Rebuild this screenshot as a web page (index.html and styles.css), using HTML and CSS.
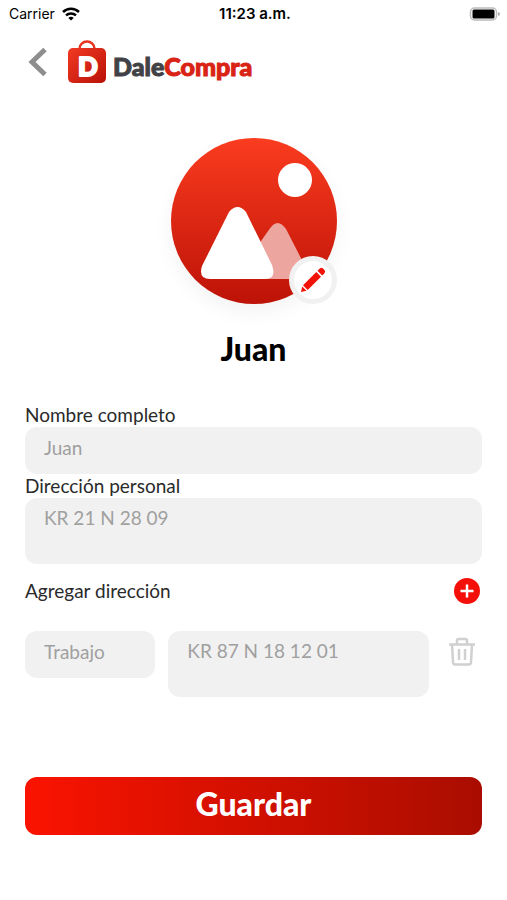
FILE: index.html
```html
<!DOCTYPE html>
<html lang="es">
<head>
<meta charset="utf-8">
<meta name="viewport" content="width=device-width, initial-scale=1">
<title>DaleCompra</title>
<link rel="stylesheet" href="styles.css">
</head>
<body>
<div class="status">
  <div class="carrier">Carrier
    <svg width="18" height="14" viewBox="0 0 18 14" fill="none" stroke="#000" stroke-width="2.5" aria-hidden="true"><path d="M1 5a11.5 11.5 0 0 1 16 0M4 8.4a7.2 7.2 0 0 1 10 0"/><path d="M9 13.6 6.3 10.900a4 4 0 0 1 5.400 0z" fill="#000" stroke="none"/></svg>
  </div>
  <time class="clock">11:23 a.m.</time>
  <svg class="battery" width="32" height="14" viewBox="0 0 32 14" aria-hidden="true"><rect x="1.500" y="1" width="26" height="12" rx="4" fill="#fff" stroke="#bbb" stroke-width="1.500"/><rect x="3.500" y="2.500" width="22" height="9" rx="1.500"/><path d="M29 5v4q2-.6 2-2t-2-2z" fill="#aaa"/></svg>
</div>
<header class="header">
  <button class="icon-button back" type="button" aria-label="Volver">
    <svg width="20" height="30" viewBox="0 0 20 30" fill="none" stroke="#8e8e8e" stroke-width="5"><path d="M17 2.500 4 15l13 12.500"/></svg>
  </button>
  <a class="brand" href="#">
    <svg width="38" height="44" viewBox="0 0 38 44" aria-hidden="true">
      <defs><linearGradient id="bag" x1="0" y1="0" x2="1" y2="1"><stop stop-color="#f23a22"/><stop offset="1" stop-color="#b91108"/></linearGradient></defs>
      <path d="M11.500 10V8.500a7.500 7 0 0 1 15 0V10" fill="none" stroke="#e83520" stroke-width="2.500"/>
      <rect y="8" width="38" height="35" rx="5" fill="url(#bag)"/>
      <text class="bag-letter" x="20" y="36" text-anchor="middle">D</text>
    </svg>
    <span class="wordmark"><span class="dark">Dale</span>Compra</span>
  </a>
</header>
<main class="profile">
  <div class="avatar">
    <svg class="photo" viewBox="0 0 166 166" role="img" aria-label="Foto de perfil">
      <defs><linearGradient id="sky" x1="0" y1="0" x2="0" y2="1"><stop stop-color="#fa3c1f"/><stop offset="1" stop-color="#bd1207"/></linearGradient></defs>
      <circle cx="83" cy="83" r="83" fill="url(#sky)"/>
      <circle cx="124" cy="42" r="17" fill="#fff"/>
      <path d="M69 133 98.500 91q8-12 16.500 0l19 37q3 13-8 13H75z" fill="#eda5a0"/>
      <path d="M58 74q8.500-10 17 0l26 53q5 14-7 14H39q-12 0-8-13z" fill="#fff"/>
    </svg>
    <button class="edit" type="button" aria-label="Editar foto">
      <svg width="26" height="26" viewBox="0 0 26 26" fill="#f31208"><path d="m1 25 1.200-5.500 4.300 4.300zM3 18.300 16.300 5l4.700 4.700L7.700 23zM17.500 3.800l2.300-2.300q1.600-1.300 3.200 0l1.500 1.500q1.300 1.600 0 3.200l-2.300 2.300z"/></svg>
    </button>
  </div>
  <h1 class="name">Juan</h1>
  <form class="form">
    <label class="label" for="full-name">Nombre completo</label>
    <input class="field" id="full-name" type="text" placeholder="Juan">
    <label class="label" for="address">Dirección personal</label>
    <textarea class="field tall" id="address" placeholder="KR 21 N 28 09"></textarea>
    <div class="add-row">
      <span>Agregar dirección</span>
      <button class="icon-button add" type="button" aria-label="Agregar dirección">
        <svg width="26" height="26" viewBox="0 0 26 26"><circle cx="13" cy="13" r="13" fill="#f41008"/><path d="M13 6.500v13M6.500 13h13" stroke="#fff" stroke-width="2.500"/></svg>
      </button>
    </div>
    <div class="address-row">
      <input class="field" type="text" aria-label="Tipo de dirección" placeholder="Trabajo">
      <textarea class="field tall" aria-label="Dirección" placeholder="KR 87 N 18 12 01"></textarea>
      <button class="icon-button trash" type="button" aria-label="Eliminar dirección">
        <svg width="26" height="30" viewBox="0 0 26 30" fill="none" stroke="#d0d0d0" stroke-width="2.500"><path d="M0 7.500h26M8 7V3.500Q8 2 9.500 2h7Q18 2 18 3.500V7M3 7l1 18.500q.2 2 2 2h14q1.800 0 2-2L23 7M10 12v11M16 12v11"/></svg>
      </button>
    </div>
    <button class="save" type="submit">Guardar</button>
  </form>
</main>
</body>
</html>
```

FILE: styles.css
```css
* {
  box-sizing: border-box;
}

body {
  margin: 0;
  background: #fff;
  color: #2a2a2a;
  font-family: Lato, "Liberation Sans", sans-serif;
  font-size: 19px;
  line-height: 24px;
}

button,
input,
textarea {
  margin: 0;
  border: 0;
  font: inherit;
}

svg {
  display: block;
}

.status {
  display: grid;
  grid-template-columns: 1fr auto 1fr;
  align-items: center;
  height: 28px;
  padding: 0 6px 0 9px;
  color: #000;
  font-family: Inter, sans-serif;
  font-size: 14px;
}

.carrier {
  display: flex;
  align-items: center;
  gap: 7px;
}

.clock {
  font-size: 15px;
  font-weight: 600;
}

.battery {
  justify-self: end;
}

.header {
  display: flex;
  align-items: center;
  gap: 20px;
  padding: 12px 28px 0;
}

.icon-button {
  padding: 0;
  background: none;
}

.brand {
  display: flex;
  align-items: center;
  gap: 7px;
  text-decoration: none;
}

.bag-letter {
  fill: #fff;
  stroke: #fff;
  stroke-width: 2px;
  stroke-linejoin: round;
  font: 900 26px Lato, sans-serif;
}

.wordmark {
  padding-top: 7px;
  color: #d92314;
  font-size: 25px;
  font-weight: 900;
  -webkit-text-stroke: 1px currentColor;
}

.dark {
  color: #414246;
}

.profile {
  padding: 54px 25px 64px;
}

.avatar {
  position: relative;
  width: 166px;
  margin: 0 auto;
  border-radius: 50%;
  box-shadow: 0 8px 20px rgba(0, 0, 0, 0.05);
}

.edit {
  position: absolute;
  right: 0;
  bottom: 0;
  display: grid;
  place-items: center;
  width: 48px;
  height: 48px;
  padding: 0;
  border: 5px solid #f1f1f1;
  border-radius: 50%;
  background: #fff;
}

.name {
  margin: 27px 0 36px;
  color: #000;
  font-size: 32px;
  font-weight: 900;
  line-height: 36px;
  text-align: center;
}

.label {
  display: block;
}

.field {
  display: block;
  width: 100%;
  height: 47px;
  padding: 8px 18px 14px 19px;
  border-radius: 12px;
  background: #f1f1f1;
  color: #222;
  resize: none;
}

.field::placeholder {
  color: #a0a0a0;
  opacity: 1;
}

.tall {
  height: 66px;
}

.add-row {
  display: flex;
  align-items: center;
  justify-content: space-between;
  padding: 14px 2px 27px 0;
}

.address-row {
  display: grid;
  grid-template-columns: 1fr 2fr 40px;
  gap: 13px;
  align-items: start;
}

.trash {
  justify-self: center;
  padding-top: 6px;
}

.save {
  display: block;
  width: 100%;
  height: 58px;
  margin-top: 80px;
  padding: 0 0 5px;
  border-radius: 12px;
  background: linear-gradient(90deg, #fa1300, #a90d00);
  color: #fff;
  font-size: 32px;
  font-weight: 900;
}
```
